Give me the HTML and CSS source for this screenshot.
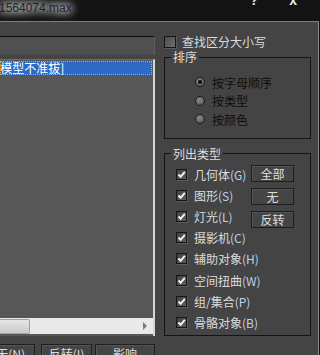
FILE: index.html
```html
<!DOCTYPE html>
<html lang="zh-CN">
<head>
    <meta charset="UTF-8">
    <meta name="viewport" content="width=device-width, initial-scale=1.0">
    <title>选择对象</title>
    <link rel="stylesheet" href="styles.css">
</head>
<body>

    <!-- Barra de título -->
    <div class="titlebar">
        <span class="title">1564074.max</span>
        <span class="caption-btn help">?</span>
        <span class="caption-btn close">x</span>
    </div>

    <div class="dialog">

        <!-- Coluna esquerda: busca + lista -->
        <div class="left-pane">
            <div class="search-field"></div>

            <div class="object-list">
                <div class="list-items">
                    <div class="list-item selected">-模型不准拔]</div>
                </div>
                <div class="hscroll">
                    <div class="hscroll-thumb"></div>
                    <div class="hscroll-arrow"></div>
                </div>
            </div>

            <div class="bottom-buttons">
                <div class="btn btn-none">无(N)</div>
                <div class="btn btn-invert">反转(I)</div>
                <div class="btn btn-affect">影响</div>
            </div>
        </div>

        <!-- Coluna direita: opções -->
        <div class="right-pane">
            <div class="check-row case-row">
                <span class="checkbox"></span>
                <span>查找区分大小写</span>
            </div>

            <fieldset class="group sort-group">
                <legend>排序</legend>
                <div class="radio-row"><span class="radio checked"></span>按字母顺序</div>
                <div class="radio-row"><span class="radio"></span>按类型</div>
                <div class="radio-row"><span class="radio"></span>按颜色</div>
            </fieldset>

            <fieldset class="group type-group">
                <legend>列出类型</legend>
                <div class="type-body">
                    <div class="type-list">
                        <div class="check-row type-row"><span class="checkbox checked"></span>几何体<span class="key">(G)</span></div>
                        <div class="check-row type-row"><span class="checkbox checked"></span>图形<span class="key">(S)</span></div>
                        <div class="check-row type-row"><span class="checkbox checked"></span>灯光<span class="key">(L)</span></div>
                        <div class="check-row type-row"><span class="checkbox checked"></span>摄影机<span class="key">(C)</span></div>
                        <div class="check-row type-row"><span class="checkbox checked"></span>辅助对象<span class="key">(H)</span></div>
                        <div class="check-row type-row"><span class="checkbox checked"></span>空间扭曲<span class="key">(W)</span></div>
                        <div class="check-row type-row"><span class="checkbox checked"></span>组/集合<span class="key">(P)</span></div>
                        <div class="check-row type-row"><span class="checkbox checked"></span>骨骼对象<span class="key">(B)</span></div>
                    </div>
                    <div class="type-buttons">
                        <div class="btn small-btn">全部</div>
                        <div class="btn small-btn">无</div>
                        <div class="btn small-btn">反转</div>
                    </div>
                </div>
            </fieldset>
        </div>

    </div>

</body>
</html>
```

FILE: styles.css
```css
/* Reset */
* {
    margin: 0;
    padding: 0;
    box-sizing: border-box;
}

body {
    width: 320px;
    height: 355px;
    overflow: hidden;
    background-color: #121212;
    font-family: "Noto Sans CJK SC", "Liberation Sans", sans-serif;
    font-size: 12px;
    color: #dcdcdc;
}

/* Barra de título */
.titlebar {
    height: 22px;
    display: flex;
    align-items: flex-start;
    background-color: #131313;
    border-bottom: 1px solid #7c7c7c;
    width: 319px;
}

.title {
    font-family: "Liberation Sans", sans-serif;
    font-size: 12px;
    line-height: 16px;
    margin-left: -1px;
    padding-right: 8px;
    color: #1c2230;
    text-shadow: 0 0 6px #fff, 0 0 10px #fff, 0 0 14px rgba(255, 255, 255, 0.8);
}

.caption-btn {
    font-family: "Liberation Sans", sans-serif;
    font-weight: bold;
    color: #e8e8e8;
    font-size: 14px;
    line-height: 14px;
    margin-top: -7px;
}

.help {
    margin-left: auto;
}

.close {
    margin-left: 31px;
    margin-right: 22px;
}

/* Caixa de diálogo */
.dialog {
    display: flex;
    width: 319px;
    height: 333px;
    background-color: #444;
    border-right: 1px solid #8a8a8a;
}

.left-pane {
    width: 155px;
    flex-shrink: 0;
    overflow: hidden;
}

.search-field {
    margin-top: 14px;
    height: 19px;
    background-color: #505050;
    border-top: 1px solid #0c0c0c;
    border-right: 1px solid #5e5e5e;
    border-bottom: 1px solid #4a4a4a;
}

/* Lista de objetos */
.object-list {
    margin-top: 4px;
    height: 277px;
    display: flex;
    flex-direction: column;
    background-color: #575757;
    border-top: 1px solid #6e6e6e;
    border-right: 2px solid #d6d6d6;
    padding: 1px 0 2px 0;
}

.list-items {
    flex: 1;
}

.list-item {
    height: 14px;
    line-height: 14px;
    white-space: nowrap;
    text-indent: -4px;
    color: #fff;
    font-size: 12px;
}

.list-item.selected {
    background-color: #2e6bc6;
    outline: 1px dotted #e3a243;
    outline-offset: -1px;
    margin-right: 1px;
}

.hscroll {
    height: 16px;
    display: flex;
    align-items: center;
    background-color: #e9e9e9;
}

.hscroll-thumb {
    width: 30px;
    height: 15px;
    background: linear-gradient(#e6e6e6, #c9c9c9);
    border: 1px solid #a0a0a0;
    border-left: none;
    border-radius: 0 2px 2px 0;
}

.hscroll-arrow {
    margin-left: auto;
    margin-right: 6px;
    width: 0;
    height: 0;
    border-top: 4px solid transparent;
    border-bottom: 4px solid transparent;
    border-left: 4px solid #7a7a7a;
}

/* Botões inferiores */
.bottom-buttons {
    display: flex;
    margin-top: 8px;
}

.btn {
    background-color: #454545;
    border: 1px solid #1e1e1e;
    box-shadow: inset 1px 1px 0 #555;
    color: #dedede;
    text-align: center;
    white-space: nowrap;
}

.bottom-buttons .btn {
    height: 24px;
    line-height: 17px;
}

.btn-none {
    width: 50px;
    margin-left: -14px;
}

.btn-invert {
    width: 51px;
    margin-left: 6px;
}

.btn-affect {
    width: 61px;
    margin-left: 3px;
}

/* Coluna direita */
.right-pane {
    flex: 1;
    padding-left: 9px;
}

.check-row {
    display: flex;
    align-items: center;
    white-space: nowrap;
}

.case-row {
    margin-top: 13px;
    height: 13px;
}

.case-row .checkbox {
    width: 12px;
    height: 12px;
    margin-right: 6px;
}

.checkbox {
    display: inline-block;
    flex-shrink: 0;
    width: 11px;
    height: 11px;
    border: 1px solid #151515;
    background: linear-gradient(135deg, #4c4c4c, #6e6e6e);
    box-shadow: 1px 1px 0 #5c5c5c;
}

.checkbox.checked {
    background:
        url("data:image/svg+xml,%3Csvg xmlns='http://www.w3.org/2000/svg' width='9' height='9'%3E%3Cpath d='M1.5 4.5 L3.6 6.8 L7.8 1.8' fill='none' stroke='%23f4f4f4' stroke-width='2'/%3E%3C/svg%3E") center / 9px 9px no-repeat,
        linear-gradient(135deg, #404040, #5e5e5e);
}

/* Grupos */
.group {
    width: 147px;
    min-width: 0;
    border: 1px solid #141414;
    padding: 0 6px;
}

.group legend {
    padding: 0 2px;
    line-height: 16px;
    color: #dcdcdc;
}

.sort-group {
    margin-top: 1px;
    padding-top: 8px;
    padding-bottom: 9px;
}

.radio-row {
    display: flex;
    align-items: center;
    height: 18.5px;
    color: #0e0e0e;
}

.radio {
    width: 10px;
    height: 10px;
    margin-left: 24px;
    margin-right: 7px;
    border-radius: 50%;
    border: 1px solid #1c1c1c;
    background: radial-gradient(circle at 40% 35%, #8a8a8a, #4a4a4a);
    display: flex;
    align-items: center;
    justify-content: center;
}

.radio.checked::after {
    content: "";
    width: 4px;
    height: 4px;
    border-radius: 50%;
    background-color: #0c0c0c;
}

.type-group {
    margin-top: 7px;
    padding-top: 2px;
    padding-bottom: 2px;
}

.type-body {
    display: flex;
}

.type-list {
    width: 80px;
    flex-shrink: 0;
}

.type-row {
    height: 21.2px;
}

.type-row .checkbox {
    margin-left: 5px;
    margin-right: 7px;
}

.key {
    color: #bfd0e8;
}

.type-buttons {
    display: flex;
    flex-direction: column;
    gap: 6px;
    padding-top: 1.5px;
}

.small-btn {
    width: 43px;
    height: 17px;
    line-height: 15px;
}
```
